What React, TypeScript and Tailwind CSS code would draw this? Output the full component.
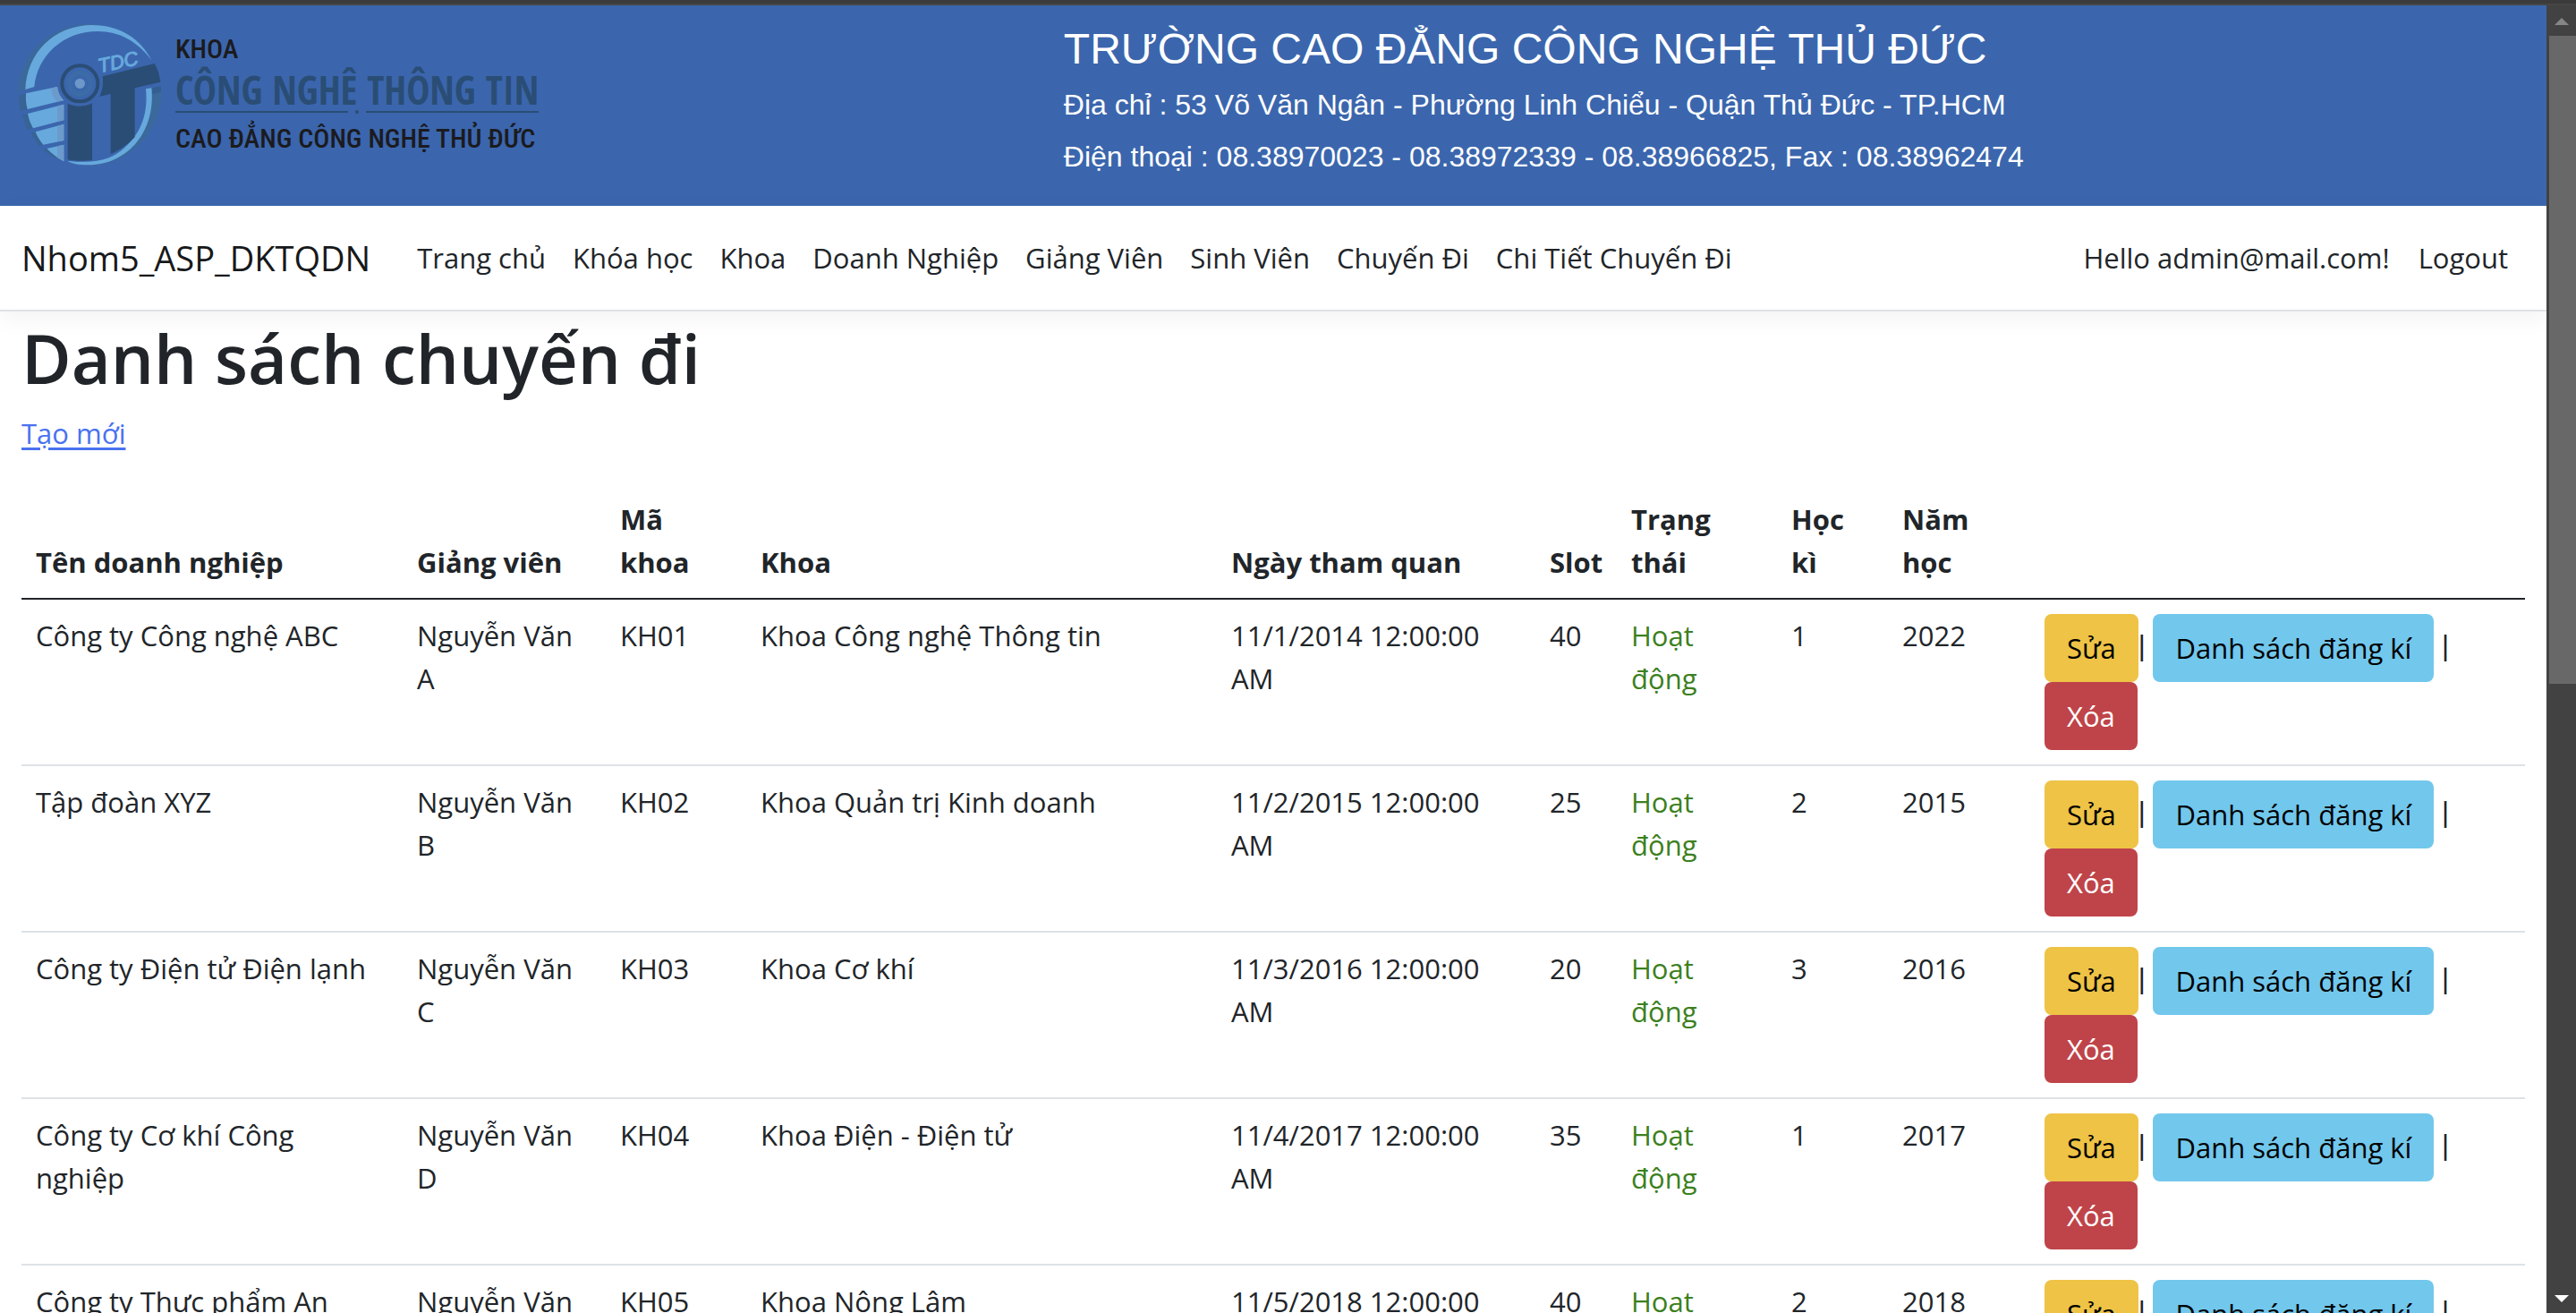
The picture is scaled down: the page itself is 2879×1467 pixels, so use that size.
import React from "react";

const NAV = [
  "Trang chủ",
  "Khóa học",
  "Khoa",
  "Doanh Nghiệp",
  "Giảng Viên",
  "Sinh Viên",
  "Chuyến Đi",
  "Chi Tiết Chuyến Đi",
];

const COLUMNS = [
  { label: "Tên doanh nghiệp", width: "w-[426px]" },
  { label: "Giảng viên", width: "w-[227px]" },
  { label: "Mã\nkhoa", width: "w-[157px]" },
  { label: "Khoa", width: "w-[526px]" },
  { label: "Ngày tham quan", width: "w-[356px]" },
  { label: "Slot", width: "w-[91px]" },
  { label: "Trạng\nthái", width: "w-[179px]" },
  { label: "Học\nkì", width: "w-[124px]" },
  { label: "Năm\nhọc", width: "w-[159px]" },
  { label: "", width: "w-[553px]" },
];

const ROWS = [
  ["Công ty Công nghệ ABC", "Nguyễn Văn\nA", "KH01", "Khoa Công nghệ Thông tin", "11/1/2014 12:00:00\nAM", "40", "1", "2022"],
  ["Tập đoàn XYZ", "Nguyễn Văn\nB", "KH02", "Khoa Quản trị Kinh doanh", "11/2/2015 12:00:00\nAM", "25", "2", "2015"],
  ["Công ty Điện tử Điện lạnh", "Nguyễn Văn\nC", "KH03", "Khoa Cơ khí", "11/3/2016 12:00:00\nAM", "20", "3", "2016"],
  ["Công ty Cơ khí Công\nnghiệp", "Nguyễn Văn\nD", "KH04", "Khoa Điện - Điện tử", "11/4/2017 12:00:00\nAM", "35", "1", "2017"],
  ["Công ty Thực phẩm An", "Nguyễn Văn\nE", "KH05", "Khoa Nông Lâm", "11/5/2018 12:00:00\nAM", "40", "2", "2018"],
];

function Emblem() {
  return (
    <svg viewBox="30 30 486 480" className="h-[160px] w-[162px] shrink-0" aria-hidden="true">
      <path d="M30 258 A241 237 0 0 1 285 33 L285 45 A225 215 0 0 0 56 252 Z" fill="#3b699c" />
      <path d="M55 252 C60 130 150 36 280 36 C370 36 440 80 478 154 C430 90 370 57 298 57 C180 57 95 140 85 243 Z" fill="#67a9dd" />
      <path d="M478 248 L510 240 L512 262 C508 400 400 508 262 508 C380 490 480 390 480 265 Z" fill="#3b699c" />
      <path d="M479 247 L510 240 L510 260 L480 268 Z" fill="#335f90" />
      <path d="M459 250 L478 247 C493 390 400 506 265 505 C235 505 210 500 195 491 C290 502 345 488 390 445 C445 395 467 330 459 250 Z" fill="#67a9dd" />
      <path d="M32 272 L58 266 L63 318 L38 324 Z M45 337 L64 333 L82 382 L60 388 Z M74 398 L90 394 L116 437 L100 441 Z M112 453 L128 450 L184 493 C150 480 130 468 112 453 Z" fill="#386395" />
      <path d="M57 265 L162 243 C165 262 171 276 184 288 L62 318 C57 300 56 285 57 265 Z" fill="#67a9dd" />
      <path d="M143 247 L162 243 C165 262 171 276 184 288 L163 293 C148 282 142 266 143 247 Z" fill="#6c9acb" />
      <path d="M63 333 L184 302 L184 355 L81 382 C72 366 66 350 63 333 Z M89 394 L184 368 L184 423 L115 437 C104 424 95 410 89 394 Z M127 450 L184 437 L184 493 C162 481 143 467 127 450 Z" fill="#67a9dd" />
      <path d="M162 307 L184 302 L184 355 L162 361 Z M162 374 L184 368 L184 423 L162 427 Z M162 442 L184 437 L184 493 L162 481 Z" fill="#6c9acb" />
      <path d="M314 208 L488 165 C500 185 505 205 508 227 L422 247 L422 412 C400 435 370 457 341 468 L341 267 L304 275 C314 255 317 230 314 208 Z" fill="#2a4d75" />
      <path d="M197 299 C225 312 255 310 279 298 L279 489 C250 493 222 492 197 487 Z" fill="#2a4d75" />
      <circle cx="238" cy="232" r="60" fill="none" stroke="#2a4d75" strokeWidth="12" />
      <circle cx="238" cy="232" r="36" fill="none" stroke="#3c6ca6" strokeWidth="15" />
      <circle cx="238" cy="232" r="17" fill="#6c98c9" />
      <text
        transform="translate(304 196) rotate(-12)"
        fill="#67a9dd"
        stroke="#67a9dd"
        strokeWidth="3"
        fontFamily="'Liberation Sans', sans-serif"
        fontStyle="italic"
        fontSize="66"
      >
        TDC
      </text>
    </svg>
  );
}

function Logo() {
  return (
    <div className="flex items-start gap-3.5">
      <Emblem />
      <div className="flex flex-col pt-2 font-['Roboto_Condensed',sans-serif] text-[30px] leading-[42px] font-medium text-[#1b1b1f]">
        <span>KHOA</span>
        <span className="font-['Open_Sans_Condensed',sans-serif] text-[44px] leading-[48px] font-bold text-[#2a4d75]">
          CÔNG NGHÊ THÔNG TIN
        </span>
        <span className="mb-2 flex items-center gap-2">
          <span className="h-[2px] flex-1 bg-[#2a4d75]" />
          <span className="-my-px size-1 rounded-full bg-[#2a4d75]" />
          <span className="h-[2px] flex-1 bg-[#2a4d75]" />
        </span>
        <span>CAO ĐẲNG CÔNG NGHỆ THỦ ĐỨC</span>
      </div>
    </div>
  );
}

function Actions() {
  const button = "inline-block h-[76px] rounded-lg px-[25px] align-middle leading-[76px]";
  return (
    <>
      <button type="button" className={`${button} bg-[#eec346] text-black`}>Sửa</button>
      <span className="font-['Liberation_Sans',sans-serif]">| </span>
      <button type="button" className={`${button} bg-[#72c7ec] text-black`}>Danh sách đăng kí</button>
      <span className="font-['Liberation_Sans',sans-serif]"> |</span>
      <br />
      <button type="button" className={`${button} bg-[#bf4449] text-white`}>Xóa</button>
    </>
  );
}

export default function App() {
  return (
    <div className="flex h-screen flex-col overflow-hidden bg-white font-['Open_Sans',sans-serif] text-[31px] leading-[48px] text-[#212529]">
      <div className="h-[6px] shrink-0 border-b-2 border-[#464646] bg-[#3b3b3b]" />
      <div className="flex min-h-0 flex-1">
        <div className="min-w-0 flex-1 overflow-hidden">
          <header className="grid h-[224px] grid-cols-[5fr_7fr] bg-[#3b66ad]">
            <div className="pt-5 pl-5">
              <Logo />
            </div>
            <div className="pt-5 pl-[3px] font-['Liberation_Sans',sans-serif] text-[32px] leading-[58px] text-white">
              <h2 className="mb-1 text-[48px]">TRƯỜNG CAO ĐẲNG CÔNG NGHỆ THỦ ĐỨC</h2>
              <p>Địa chỉ : 53 Võ Văn Ngân - Phường Linh Chiểu - Quận Thủ Đức - TP.HCM</p>
              <p>Điện thoại : 08.38970023 - 08.38972339 - 08.38966825, Fax : 08.38962474</p>
            </div>
          </header>

          <nav className="flex h-[118px] items-center border-b-2 border-[#dee2e6] pr-[43px] pl-6 shadow-[0_8px_24px_rgba(0,0,0,0.05)]">
            <a href="#" className="mr-[52px] text-[38px] text-[#17191b]">Nhom5_ASP_DKTQDN</a>
            <ul className="flex gap-[30px]">
              {NAV.map((item) => (
                <li key={item}>
                  <a href="#">{item}</a>
                </li>
              ))}
            </ul>
            <div className="ml-auto flex gap-8">
              <span>Hello admin@mail.com!</span>
              <button type="button">Logout</button>
            </div>
          </nav>

          <main className="px-6">
            <h1 className="mb-2 text-[76px] leading-[104px] font-semibold">Danh sách chuyến đi</h1>
            <p>
              <a href="#" className="text-[#4a72f0] underline decoration-3 underline-offset-4">Tạo mới</a>
            </p>
            <table className="mt-8 w-full table-fixed border-collapse text-left">
              <thead>
                <tr className="border-b-2 border-[#212529]">
                  {COLUMNS.map((c, i) => (
                    <th key={i} scope="col" className={`${c.width} p-4 align-bottom font-bold whitespace-pre-line`}>
                      {c.label}
                    </th>
                  ))}
                </tr>
              </thead>
              <tbody>
                {ROWS.map(([company, teacher, code, faculty, date, slot, term, year]) => (
                  <tr key={code} className="border-b-2 border-[#dee2e6] align-top whitespace-pre-line">
                    <td className="p-4">{company}</td>
                    <td className="p-4">{teacher}</td>
                    <td className="p-4">{code}</td>
                    <td className="p-4">{faculty}</td>
                    <td className="p-4">{date}</td>
                    <td className="p-4">{slot}</td>
                    <td className="p-4 text-[#3c8020]">{"Hoạt\nđộng"}</td>
                    <td className="p-4">{term}</td>
                    <td className="p-4">{year}</td>
                    <td className="p-4">
                      <Actions />
                    </td>
                  </tr>
                ))}
              </tbody>
            </table>
          </main>
        </div>

        <aside className="flex w-[33px] shrink-0 flex-col items-center bg-[#424242]" aria-hidden="true">
          <svg viewBox="0 0 16 8" className="mt-[14px] mb-3 h-2 w-4 shrink-0" fill="#868686">
            <path d="M8 0 L16 8 H0 Z" />
          </svg>
          <div className="ml-[2px] h-[724px] w-[30px] shrink-0 bg-[#686868]" />
          <svg viewBox="0 0 16 8" className="mt-auto mb-3 h-2 w-4 shrink-0" fill="#ffffff">
            <path d="M0 0 H16 L8 8 Z" />
          </svg>
        </aside>
      </div>
    </div>
  );
}
